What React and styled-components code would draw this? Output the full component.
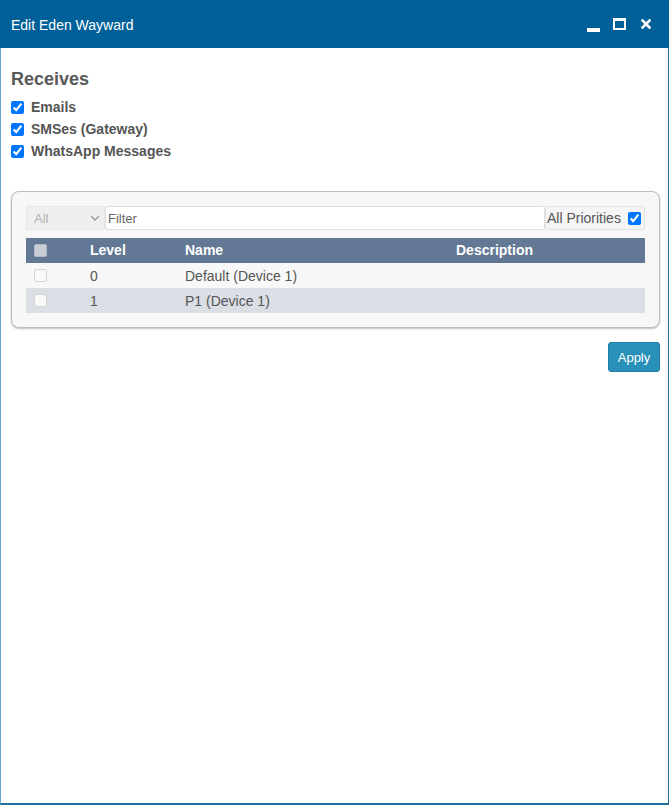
import * as React from "react"
import styled, { createGlobalStyle } from "styled-components"

const GlobalStyle = createGlobalStyle`
  html, body {
    margin: 0;
    padding: 0;
    background: #ffffff;
  }
  body {
    font-family: "Liberation Sans", Arial, sans-serif;
  }
`

const rows = [
  { level: 0, name: "Default (Device 1)", description: "" },
  { level: 1, name: "P1 (Device 1)", description: "" },
]

const channels = ["Emails", "SMSes (Gateway)", "WhatsApp Messages"]

const App = () => {
  return (
    <>
      <GlobalStyle />
      <Window>
        <TitleBar>
          <Title>Edit Eden Wayward</Title>
          <Controls>
            <Minimize />
            <Maximize />
            <Close>
              <svg width="10" height="10" viewBox="0 0 10 10">
                <path d="M1.5 1.5 L8.5 8.5 M8.5 1.5 L1.5 8.5" stroke="#fff" strokeWidth="2.6" strokeLinecap="square" />
              </svg>
            </Close>
          </Controls>
        </TitleBar>
        <Body>
          <Heading>Receives</Heading>
          <Options>
            {channels.map(c => (
              <Option key={c}>
                <Check type="checkbox" defaultChecked />
                {c}
              </Option>
            ))}
          </Options>
          <Panel>
            <FilterRow>
              <SelectBox>
                All
                <svg width="10" height="6" viewBox="0 0 10 6">
                  <path d="M1 1 L5 5 L9 1" fill="none" stroke="#999" strokeWidth="1.3" />
                </svg>
              </SelectBox>
              <FilterInput placeholder="Filter" />
              <PriorityBox>
                All Priorities
                <Check type="checkbox" defaultChecked />
              </PriorityBox>
            </FilterRow>
            <Table>
              <colgroup>
                <col style={{ width: 56 }} />
                <col style={{ width: 95 }} />
                <col style={{ width: 271 }} />
                <col />
              </colgroup>
              <thead>
                <tr>
                  <Th><HeadBox /></Th>
                  <Th>Level</Th>
                  <Th>Name</Th>
                  <Th>Description</Th>
                </tr>
              </thead>
              <tbody>
                {rows.map((r, i) => (
                  <Row key={r.level} $odd={i % 2 === 1}>
                    <Td><RowBox /></Td>
                    <Td>{r.level}</Td>
                    <Td>{r.name}</Td>
                    <Td>{r.description}</Td>
                  </Row>
                ))}
              </tbody>
            </Table>
          </Panel>
          <Actions>
            <ApplyButton>Apply</ApplyButton>
          </Actions>
        </Body>
      </Window>
    </>
  )
}

export default App

const Window = styled.div`
  width: 669px;
  height: 805px;
  box-sizing: border-box;
  border-left: 1px solid #6aa6cc;
  border-right: 1px solid #1f6e9e;
  border-bottom: 2px solid #1f6e9e;
  display: flex;
  flex-direction: column;
  background: #fff;
`
const TitleBar = styled.div`
  height: 48px;
  flex-shrink: 0;
  background: #00609a;
  margin-left: -1px;
  margin-right: -1px;
  display: flex;
  align-items: center;
  justify-content: space-between;
  padding: 0 18px 0 11px;
`
const Title = styled.span`
  color: #fff;
  font-size: 14px;
  padding-top: 2px;
`
const Controls = styled.div`
  display: flex;
  align-items: center;
  gap: 13px;
`
const Minimize = styled.span`
  width: 13px;
  height: 4px;
  background: #fff;
  margin-top: 11px;
`
const Maximize = styled.span`
  width: 13px;
  height: 12px;
  box-sizing: border-box;
  border: 2px solid #fff;
  border-top-width: 3px;
`
const Close = styled.span`
  display: flex;
  width: 10px;
  height: 10px;
  margin-left: 2px;
`
const Body = styled.div`
  padding: 20px 8px 0 10px;
  color: #555;
`
const Heading = styled.div`
  font-size: 18px;
  font-weight: 700;
  line-height: 22px;
  color: #595959;
`
const Options = styled.div`
  margin-top: 6px;
  display: flex;
  flex-direction: column;
`
const Option = styled.label`
  display: flex;
  align-items: center;
  height: 22px;
  font-size: 14px;
  font-weight: 700;
  gap: 7px;
`
const Check = styled.input`
  width: 13px;
  height: 13px;
  margin: 0;
  accent-color: #0075ff;
`
const Panel = styled.div`
  margin-top: 29px;
  border: 1px solid #bdbdbd;
  border-radius: 8px;
  background: #f7f7f7;
  box-shadow: 0 1px 2px rgba(0, 0, 0, 0.25);
  padding: 14px;
`
const FilterRow = styled.div`
  display: flex;
  height: 24px;
  margin-bottom: 8px;
`
const SelectBox = styled.div`
  width: 79px;
  box-sizing: border-box;
  background: #efefef;
  border: 1px solid #e6e6e6;
  border-radius: 2px;
  color: #b0b0b0;
  font-size: 13px;
  display: flex;
  align-items: center;
  justify-content: space-between;
  padding: 0 4px 0 7px;
`
const FilterInput = styled.input`
  flex: 1;
  min-width: 0;
  box-sizing: border-box;
  height: 24px;
  border: 1px solid #dedede;
  border-radius: 2px;
  background: #fff;
  font-family: inherit;
  font-size: 13px;
  padding: 0 2px;
  outline: none;
  &::placeholder {
    color: #666;
  }
`
const PriorityBox = styled.label`
  width: 100px;
  box-sizing: border-box;
  border: 1px solid #e2e2e2;
  border-radius: 2px;
  background: #f5f5f5;
  display: flex;
  align-items: center;
  justify-content: space-between;
  padding: 0 3px 0 1px;
  font-size: 14px;
  color: #555;
`
const Table = styled.table`
  width: 100%;
  table-layout: fixed;
  border-collapse: collapse;
  font-size: 14px;
`
const Th = styled.th`
  background: #627895;
  color: #fff;
  font-weight: 700;
  text-align: left;
  height: 25px;
  padding: 0 0 0 8px;
  line-height: 25px;
`
const Row = styled.tr`
  background: ${p => (p.$odd ? "#dbdee4" : "#f8f8f8")};
`
const Td = styled.td`
  height: 25px;
  padding: 0 0 0 8px;
  color: #555;
`
const HeadBox = styled.span`
  display: block;
  width: 13px;
  height: 13px;
  box-sizing: border-box;
  background: #c8cdd6;
  border: 1px solid #b4bbc6;
  border-radius: 2px;
`
const RowBox = styled.span`
  display: block;
  width: 13px;
  height: 13px;
  box-sizing: border-box;
  background: #f9f9f9;
  border: 1px solid #d4d4d4;
  border-radius: 2px;
`
const Actions = styled.div`
  display: flex;
  justify-content: flex-end;
  margin-top: 14px;
`
const ApplyButton = styled.button`
  width: 52px;
  height: 30px;
  background: #2990b9;
  border: 1px solid #227ea3;
  border-radius: 3px;
  color: #fff;
  font-family: inherit;
  font-size: 13px;
  padding: 0;
`
